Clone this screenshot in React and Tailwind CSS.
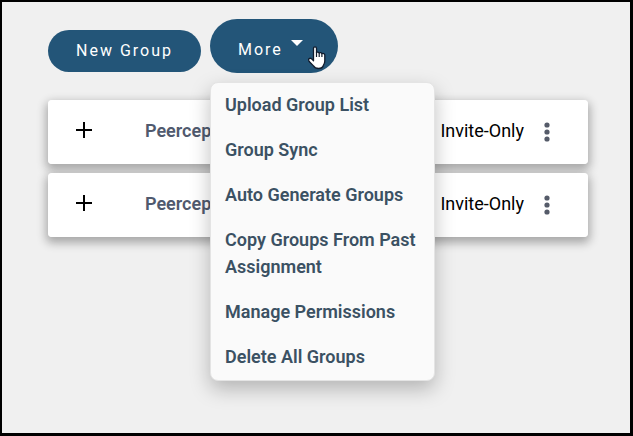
import React, { useState } from 'react';

const menuItems = [
    'Upload Group List',
    'Group Sync',
    'Auto Generate Groups',
    'Copy Groups From Past Assignment',
    'Manage Permissions',
    'Delete All Groups',
];

const groups = [
    { id: 1, name: 'Peercep', access: 'Invite-Only' },
    { id: 2, name: 'Peercep', access: 'Invite-Only' },
];

function HandCursor() {
    return (
        <svg
            width="18"
            height="24"
            viewBox="0 0 18 24"
            className="pointer-events-none absolute right-3 bottom-[3px]"
            aria-hidden="true"
        >
            <path
                d="M5.5 2.5c0-1 .7-1.700 1.500-1.700s1.500.7 1.500 1.700v4c.4-.6 2.300-.5 2.700.5.600-.6 2.300-.4 2.700.7.800-.6 2.900-.3 2.900 1.300v6c0 2-.6 3.200-1.500 4.500-.5 2.200-1.800 3-4.800 3-2.600 0-4-.8-5-2.600L1.200 15.500c-.7-1.300-.9-2.300 0-2.900 1-.6 2.200-.2 3.200 1l1.100 1.200z"
                fill="#fff"
                stroke="#0f1a2b"
                strokeWidth="1.300"
                strokeLinejoin="round"
            />
            <path d="M8.500 6v5M11.200 7v4M13.900 8v3" stroke="#0f1a2b" strokeWidth="1.200" fill="none" />
        </svg>
    );
}

function MoreMenu() {
    const [open, setOpen] = useState(true);

    return (
        <div className="relative">
            <button
                type="button"
                aria-expanded={open}
                onClick={() => setOpen(!open)}
                className="flex h-[54px] w-32 items-center rounded-full bg-[#235578] pt-2 pl-7 text-base tracking-[2px] text-white"
            >
                More
                <svg width="12" height="6" viewBox="0 0 12 6" className="mb-[14px] ml-2" aria-hidden="true">
                    <path d="M0 0h12L6 6z" fill="currentColor" />
                </svg>
            </button>
            <HandCursor />
            {open && (
                <ul className="absolute top-full left-0 z-10 mt-[9px] w-[225px] rounded-lg border border-[#e4e4e4] bg-[#fafafa] shadow-[0_8px_20px_rgba(0,0,0,0.25)]">
                    {menuItems.map(item => (
                        <li key={item}>
                            <button
                                type="button"
                                className="w-full px-[14px] pt-2 pb-[10px] text-left text-lg leading-[27px] font-semibold text-[#3b5163]"
                            >
                                {item}
                            </button>
                        </li>
                    ))}
                </ul>
            )}
        </div>
    );
}

function GroupRow({ group }) {
    return (
        <li className="rounded shadow-[0_4px_10px_2px_rgba(0,0,0,0.3)]">
            <div className="relative flex h-16 items-center rounded bg-white pr-[33px] pb-[2px] pl-7 text-lg">
                <button type="button" aria-label="Expand" className="mb-[2px] text-black">
                    <svg width="16" height="16" viewBox="0 0 16 16" aria-hidden="true">
                        <path d="M8 0v16M0 8h16" stroke="currentColor" strokeWidth="2" />
                    </svg>
                </button>
                <span className="ml-[53px] flex-1 font-semibold text-[#505a6e]">{group.name}</span>
                <span className="text-black">{group.access}</span>
                <button type="button" aria-label="Options" className="mt-[2px] ml-[15px] w-4 text-[#555b69]">
                    <svg width="16" height="20" viewBox="0 0 16 20" fill="currentColor" aria-hidden="true">
                        <circle cx="8" cy="3" r="2.600" />
                        <circle cx="8" cy="10" r="2.600" />
                        <circle cx="8" cy="17" r="2.600" />
                    </svg>
                </button>
            </div>
        </li>
    );
}

export default function App() {
    return (
        <main className="min-h-screen border-2 border-r-3 border-b-3 border-black bg-[#f0f0f0] pt-[17px] pr-[42px] pl-[46px] font-['Roboto',sans-serif]">
            <div className="flex gap-[9px]">
                <button
                    type="button"
                    className="mt-[11px] h-[42px] w-[153px] rounded-full bg-[#235578] text-base tracking-[2px] text-white"
                >
                    New Group
                </button>
                <MoreMenu />
            </div>
            <ul className="mt-[27px] flex flex-col gap-[9px]">
                {groups.map(group => (
                    <GroupRow key={group.id} group={group} />
                ))}
            </ul>
        </main>
    );
}
